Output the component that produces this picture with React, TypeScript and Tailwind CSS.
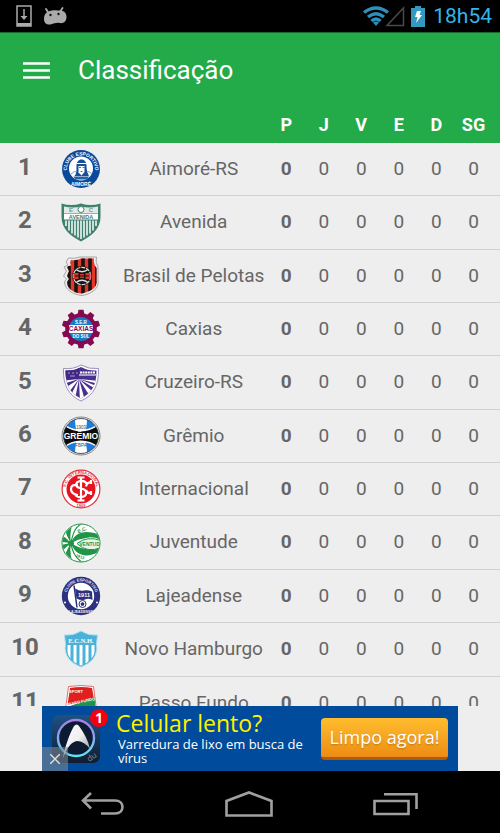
import type { ReactNode } from "react";

function Crest({ name, children }: { name: string; children: ReactNode }) {
  return (
    <svg
      viewBox="0 0 40 40"
      role="img"
      aria-label={name}
      className="mx-auto block size-10 font-['Liberation_Sans',sans-serif]"
    >
      {children}
    </svg>
  );
}

function Aimore() {
  return (
    <Crest name="Aimoré-RS">
      <path id="aim-top" d="M6.500 25 A14.200 14.200 0 1 1 33.500 25" fill="none" />
      <circle cx="20" cy="20" r="19" fill="#0b4a9b" />
      <circle cx="20" cy="19.500" r="12" fill="#fff" />
      <path d="M13.500 27c2-2 2-6 2-10 0-4 2-6.500 5-6.500s5 2.500 5 6.500c0 4 1 7 2.500 10z" fill="#174f98" />
      <path d="M17.500 17h6v6l-3 3.500-3-3z" fill="#fff" />
      <path d="M15.500 14.500h10" stroke="#fff" strokeWidth="1" />
      <path d="M18 18.500h2M21.500 18.500h2M19.500 22.500h2" stroke="#174f98" strokeWidth=".8" />
      <path d="M10 25q3-3 5.500-2.500M31 25q-2-2.500-4.500-2.500" stroke="#7fa1cc" fill="none" />
      <path d="M12.500 27.500h15.500l-2 3h-11.500z" fill="#2a5fa5" />
      <text fontSize="4.800" fontWeight="700" fill="#fff">
        <textPath href="#aim-top" startOffset="50%" textAnchor="middle">CLUBE ESPORTIVO</textPath>
      </text>
      <text x="20" y="36.800" fontSize="5" fontWeight="700" textAnchor="middle" fill="#fff">AIMORÉ</text>
    </Crest>
  );
}

function Avenida() {
  return (
    <Crest name="Avenida">
      <path d="M.5 1.500q10 3 19.500 0q9.500 3 19.500 0v13.500c0 12-9 19-19.500 24.500C9.500 34 .5 27 .5 15z" fill="#40806f" />
      <path d="M3 4.500q9 2 17 0q8 2 17 0v7H3z" fill="#dfeae7" />
      <circle cx="20" cy="7.500" r="3" fill="#fff" stroke="#40806f" strokeWidth="1" />
      <text x="10" y="10" fontSize="6" fontWeight="700" textAnchor="middle" fill="#6d9e91">E</text>
      <text x="30" y="10" fontSize="6" fontWeight="700" textAnchor="middle" fill="#6d9e91">C</text>
      <rect x="3" y="12" width="34" height="5.500" fill="#fff" />
      <text x="20" y="16.800" fontSize="5.500" fontWeight="700" textAnchor="middle" fill="#40806f">AVENIDA</text>
      <path
        d="M5 18.500v5.500M8 18.500v10M11 18.500v13M14 18.500v15M17 18.500v17M20 18.500v18.500M23 18.500v17M26 18.500v15M29 18.500v13M32 18.500v10M35 18.500v5.500"
        stroke="#e5efec"
        strokeWidth="1.700"
      />
    </Crest>
  );
}

function Brasil() {
  return (
    <Crest name="Brasil de Pelotas">
      <clipPath id="bra">
        <path d="M10 4q6 1 10-1.500h13q-1 5 2.500 9.500v15c-1 7-9 9-15 10.500C13 37 6 33 6 26l2-3-2-3 2-5-2-4 4-2-1-2z" />
      </clipPath>
      <path
        d="M7.500 2q6.500 1 11.500-1h16.500q-1.500 5 1.500 10v17c-1 7-10 10.500-16 11.500C12 38.500 4 34 3.500 26l2-3-3-3 3-5-2.500-4 4-2-2-3z"
        fill="#ececec"
        stroke="#a5a5a5"
      />
      <g clipPath="url(#bra)">
        <rect width="40" height="40" fill="#e3372c" />
        <path d="M8 10v30M15 0v40M22 0v40M29 0v40M36 0v40" stroke="#171313" strokeWidth="3.600" />
      </g>
      <circle cx="21" cy="20" r="10" fill="#151515" />
      <circle cx="21" cy="20" r="8.700" fill="none" stroke="#ddd" strokeWidth="1.200" strokeDasharray="4 1" />
      <path d="M15 13.500q6 4.500 12 0M15 26.500q6-4.500 12 0" fill="none" stroke="#ddd" strokeWidth="1.500" />
      <path d="M12.500 17h5v6h-5zM24.500 17h5v6h-5zM19 18h4v4h-4z" fill="#d93328" />
      <path d="M14 20h14" stroke="#151515" strokeWidth="1" />
    </Crest>
  );
}

function Caxias() {
  const teeth = [0, 36, 72, 108, 144, 180, 216, 252, 288, 324];
  return (
    <Crest name="Caxias">
      {teeth.map((angle) => (
        <path key={angle} d="M17.500.8h5l1 5h-7z" fill="#85094f" transform={`rotate(${angle} 20 20)`} />
      ))}
      <circle cx="20" cy="20" r="15.800" fill="#85094f" />
      <circle cx="20" cy="20" r="12" fill="#147cc5" />
      <text x="20" y="14.800" fontSize="4.500" fontWeight="700" textAnchor="middle" fill="#fff">S.E.R</text>
      <rect x="8" y="16" width="24" height="8" rx="1" fill="#fff" />
      <text x="20" y="22.300" fontSize="6.500" fontWeight="700" textAnchor="middle" fill="#85094f">CAXIAS</text>
      <text x="20" y="29" fontSize="4.500" fontWeight="700" textAnchor="middle" fill="#fff">DO SUL</text>
    </Crest>
  );
}

function Cruzeiro() {
  return (
    <Crest name="Cruzeiro-RS">
      <clipPath id="cru">
        <path d="M4.500 7.500q9 .5 15.500-3.500q7 4 15.500 3.500c0 14-4 22-15.500 28C8 30 4.500 21 4.500 7.500z" />
      </clipPath>
      <path
        d="M2.500 5.500q10 1 17.500-3.500q8 4.500 17.500 3.500C38 22 33 32 20 38 7 32 2 22 2.500 5.500z"
        fill="#fff"
        stroke="#9b8fc0"
        strokeWidth="1"
      />
      <g clipPath="url(#cru)">
        <rect width="40" height="40" fill="#4a318e" />
        <path
          d="M18 16 0 18v3.500zM18 16 4 25l4 4zM18 16 10 32l4 4zM18 16l1 24 5-2zM18 16l12 19 4-4zM18 16l20 12v-4zM18 16l20 5v-3z"
          fill="#fff"
        />
        <path d="M18 12h20" stroke="#cdc5e2" strokeWidth="1.500" />
        <path d="M19 9.500h15" stroke="#fff" strokeWidth="2" strokeDasharray="2 .6" />
        <path d="M4 6l14-1v11H4z" fill="#402884" />
        <path d="M7 10h2M11 10h2M15 10h2M9 13h5" stroke="#a79bcb" />
      </g>
    </Crest>
  );
}

function Gremio() {
  return (
    <Crest name="Grêmio">
      <clipPath id="gre">
        <circle cx="20" cy="20" r="17.500" />
      </clipPath>
      <circle cx="20" cy="20" r="19" fill="#fff" stroke="#7d8082" strokeWidth="1" />
      <g clipPath="url(#gre)">
        <rect width="40" height="40" fill="#1c7de0" />
        <path d="M15.500 0h9l1.500 5-1 9H15l-1-9zM15 26h10l1 9-1.500 5h-9L14 35z" fill="#fff" />
        <path d="M0 6q20 16 40 0v28q-20-16-40 0z" fill="#fff" />
        <path d="M0 7.500q20 16 40 0v25q-20-16-40 0z" fill="#0d0d0d" />
      </g>
      <circle cx="20" cy="20" r="17.500" fill="none" stroke="#333" strokeWidth=".8" />
      <text x="20" y="13" fontSize="4.500" textAnchor="middle" fill="#444">1903</text>
      <text x="20" y="23.300" fontSize="8.500" fontWeight="700" textAnchor="middle" fill="#fff">GRÊMIO</text>
      <text x="20" y="31" fontSize="4.500" textAnchor="middle" fill="#444">FBPA</text>
    </Crest>
  );
}

function Internacional() {
  return (
    <Crest name="Internacional">
      <path id="int-top" d="M6 27 A15.500 15.500 0 1 1 34 27" fill="none" />
      <circle cx="20" cy="20" r="18.900" fill="#fff" stroke="#e5303a" strokeWidth="1.200" />
      <circle cx="20" cy="20" r="14.500" fill="#e5141f" />
      <text fontSize="4.200" fontWeight="700" fill="#e5303a">
        <textPath href="#int-top" startOffset="50%" textAnchor="middle">S.C. INTERNACIONAL</textPath>
      </text>
      <path
        d="M20 8v24M16.500 8.500h7M16.500 31.500h7M26 15q-2-4-7-3c-5 1-5 6 0 7l3 1c5 2 4 7-1 8q-5 1-7-3M17 16q-7-1-7 4t7 6M31 13q-5 0-6 4.500M31 24q-5 1-6-3M30 11v4M30 22v4"
        fill="none"
        stroke="#fff"
        strokeWidth="2.200"
      />
      <text x="20" y="38.200" fontSize="4" fontWeight="700" textAnchor="middle" fill="#e5303a">1909</text>
    </Crest>
  );
}

function Juventude() {
  return (
    <Crest name="Juventude">
      <clipPath id="juv">
        <circle cx="20" cy="20" r="18.500" />
      </clipPath>
      <circle cx="20" cy="20" r="19" fill="#fff" stroke="#229447" strokeWidth="1" />
      <g clipPath="url(#juv)" fill="#229447">
        <path d="M10 20Q5 14 0 12v7zM10 20Q5 12 4 6l8-6Q8 10 10 20zM10 20 0 22v7zM10 20Q5 28 4 33l8 7Q8 30 10 20z" />
        <path d="M10 20C14 9 24 6 40 12v5q-8-4-15-2-8 1-15 5zM10 20c4 12 14 16 28 9v-4q-8 3-13 1-8-1-15-6z" />
        <path d="M10 20C12 9 15 3 22 0M10 20c1 9 4 15 12 20" fill="none" stroke="#229447" strokeWidth="1.200" />
        <path d="M16 20.500q10-8 24-3v7q-14 6-24-4z" fill="#e9f5ec" stroke="#229447" />
      </g>
      <circle cx="10" cy="20.500" r="3" fill="#229447" />
      <text x="28.500" y="23" fontSize="5" fontWeight="700" textAnchor="middle" fill="#229447">VENTUD</text>
      <text x="22" y="8.500" fontSize="5" fontWeight="700" textAnchor="middle" fill="#229447" transform="rotate(-20 22 9)">E.C.</text>
      <text x="19" y="35" fontSize="4" fontWeight="700" textAnchor="middle" fill="#229447" transform="rotate(20 19 34)">1913</text>
    </Crest>
  );
}

function Lajeadense() {
  return (
    <Crest name="Lajeadense">
      <path id="laj-top" d="M6 24 A14.600 14.600 0 1 1 34 24" fill="none" />
      <circle cx="20" cy="20" r="19.200" fill="#2c327f" />
      <circle cx="20" cy="20" r="13.200" fill="#fff" />
      <path d="M13 9.500l3 22" stroke="#2c327f" strokeWidth="1.500" />
      <path d="M14 12.500q5 3 9 2t8 1l.5 8.500q-4-2-7.500-.5t-8.500-1z" fill="#2c327f" />
      <text x="23" y="20.500" fontSize="5.500" fontWeight="700" textAnchor="middle" fill="#fff">1911</text>
      <circle cx="21.500" cy="28" r="3.500" fill="#fff" stroke="#2c327f" strokeWidth="1" />
      <path d="m21.500 26 2 1.500-.8 2.200h-2.400l-.8-2.200z" fill="#2c327f" />
      <circle cx="4" cy="26.500" r="1" fill="#fff" />
      <circle cx="36" cy="26.500" r="1" fill="#fff" />
      <text fontSize="4" fontWeight="700" fill="#e4e5f2">
        <textPath href="#laj-top" startOffset="50%" textAnchor="middle">CLUBE ESPORTIVO</textPath>
      </text>
      <text x="20" y="37" fontSize="3.600" fontWeight="700" textAnchor="middle" fill="#e4e5f2">LAJEADENSE</text>
    </Crest>
  );
}

function NovoHamburgo() {
  return (
    <Crest name="Novo Hamburgo">
      <clipPath id="nov">
        <path d="M5 7q9 1 15-3q6 4 15 3l-1 8c2 11-5 18-14 21.500C11 33 4 26 6 15z" />
      </clipPath>
      <path
        d="M3.500 6q9 1 16.500-4q7.500 5 16.500 4l-1 9c2 12-5.500 19-15.500 23C10 34 2.500 27 4.500 15z"
        fill="#4ab1d8"
        stroke="#b3ddec"
        strokeWidth="1"
      />
      <path
        clipPath="url(#nov)"
        d="M8 16v24M14 16v24M20 16v24M26 16v24M32 16v24"
        stroke="#fff"
        strokeWidth="3"
      />
      <text
        x="20"
        y="13.500"
        fontSize="6.500"
        fontWeight="700"
        textAnchor="middle"
        fill="#fff"
        className="font-['Liberation_Serif',serif]"
      >
        E.C.N.H.
      </text>
    </Crest>
  );
}

function PassoFundo() {
  return (
    <Crest name="Passo Fundo">
      <path d="M7.500 3.500q12.500-2 25 0l3.500 27q-8 6-16 8-8-2-16-8z" fill="#fff" stroke="#e0706c" />
      <path d="M9 5q11-2 22 0l2 11L6.500 22z" fill="#e0201f" />
      <path d="m6.500 24 27-10 1.500 15q-7 5-15 7-8-2-14-7z" fill="#1d9447" />
      <text x="15" y="9.500" fontSize="4" fontWeight="700" textAnchor="middle" fill="#fff">SPORT</text>
      <text x="20" y="20" fontSize="4" fontWeight="700" textAnchor="middle" fill="#fff" transform="rotate(-12 20 20)">PASSO FUNDO</text>
    </Crest>
  );
}

const teams = [
  { name: "Aimoré-RS", crest: <Aimore /> },
  { name: "Avenida", crest: <Avenida /> },
  { name: "Brasil de Pelotas", crest: <Brasil /> },
  { name: "Caxias", crest: <Caxias /> },
  { name: "Cruzeiro-RS", crest: <Cruzeiro /> },
  { name: "Grêmio", crest: <Gremio /> },
  { name: "Internacional", crest: <Internacional /> },
  { name: "Juventude", crest: <Juventude /> },
  { name: "Lajeadense", crest: <Lajeadense /> },
  { name: "Novo Hamburgo", crest: <NovoHamburgo /> },
  { name: "Passo Fundo", crest: <PassoFundo /> },
];

const stats = ["P", "J", "V", "E", "D", "SG"];

function StatusBar() {
  return (
    <div className="flex h-8 shrink-0 items-center bg-black px-2">
      <svg viewBox="0 0 16 22" className="ml-2 h-[22px] w-4">
        <path d="M1 1h14v20H1z" fill="none" stroke="#aaa" strokeWidth="1.500" />
        <path d="M1 18h14v3H1z" fill="#aaa" />
        <path d="M8 4v9" stroke="#aaa" strokeWidth="1.500" />
        <path d="M4.500 11h7L8 15z" fill="#aaa" />
      </svg>
      <svg viewBox="0 0 24 18" className="ml-[11px] h-[18px] w-6">
        <path d="M5.500 6 3 2M17 5 19.500 1" stroke="#aaa" strokeWidth="1.800" strokeLinecap="round" />
        <path
          d="M1 12C1 6 5 4 9 3.500c3-.5 5 .2 8-.3 4 .3 6.500 3 6.500 6.500 0 5-3 7-7 6.300-3-.5-5 .5-9 1.500C3.500 18 1 16 1 12z"
          fill="#aaa"
        />
        <circle cx="7.500" cy="8" r="1.200" fill="#111" />
        <circle cx="15.500" cy="7" r="1.200" fill="#111" />
      </svg>
      <svg viewBox="0 0 26 20" className="ml-auto h-5 w-[26px]">
        <g fill="none" stroke="#2c8fbd" strokeWidth="3.400">
          <path d="M1 6.500q12-9 24 0" />
          <path d="M5 11q8-6.500 16 0" />
          <path d="M8.500 15q4.500-4 9 0" />
        </g>
        <path d="M10 16.500q3-2 6 0L13 20z" fill="#2c8fbd" />
      </svg>
      <svg viewBox="0 0 20 21" className="-ml-1 h-[21px] w-5">
        <path d="M18.500 2v17.500H2z" fill="none" stroke="#4a4a4a" strokeWidth="1.500" />
      </svg>
      <svg viewBox="0 0 14 21" className="ml-1.5 h-[21px] w-3.5">
        <path d="M4 0h6v2h4v19H0V2h4z" fill="#3399bf" />
        <path d="M6 5h4L8.500 9H11l-6 8 1.500-6H4z" fill="#fff" />
      </svg>
      <span className="ml-2 text-[21px] leading-8 text-[#33b5e5]">18h54</span>
    </div>
  );
}

function Header() {
  return (
    <header className="flex h-[75px] shrink-0 items-center gap-7 border-t border-[#146b2c] bg-[#23ab4a] pl-[23px] text-white">
      <button type="button" aria-label="Menu">
        <svg viewBox="0 0 27 17" className="block h-[17px] w-[27px]">
          <path d="M0 1.500h27M0 8.500h27M0 15.500h27" stroke="#fff" strokeWidth="2.600" />
        </svg>
      </button>
      <h1 className="text-[26px]">Classificação</h1>
    </header>
  );
}

function Standings() {
  return (
    <main className="min-h-0 flex-1 overflow-hidden">
      <table className="h-[623px] w-full table-fixed border-collapse text-center text-[#666]">
        <colgroup>
          <col className="w-[50px]" />
          <col className="w-[62px]" />
          <col />
          <col className="w-[7.5%]" />
          <col className="w-[7.5%]" />
          <col className="w-[7.5%]" />
          <col className="w-[7.5%]" />
          <col className="w-[7.5%]" />
          <col className="w-[9%]" />
        </colgroup>
        <thead>
          <tr className="h-9 bg-[#23ab4a] text-lg text-white">
            <td colSpan={3} />
            {stats.map((stat) => (
              <th key={stat} scope="col" className="p-0 font-bold last:pr-2">
                {stat}
              </th>
            ))}
          </tr>
        </thead>
        <tbody>
          {teams.map((team, i) => (
            <tr key={team.name} className="border-b border-[#d2d2d2]">
              <td className="p-0 pb-1 text-2xl font-bold">{i + 1}</td>
              <td className="p-0">{team.crest}</td>
              <td className="p-0 pl-2 text-[19px] whitespace-nowrap">{team.name}</td>
              {stats.map((stat) => (
                <td key={stat} className="p-0 text-[19px] last:pr-2 nth-[4]:font-bold">
                  0
                </td>
              ))}
            </tr>
          ))}
        </tbody>
      </table>
    </main>
  );
}

function Advert() {
  return (
    <aside className="relative mx-auto flex h-[65px] w-full max-w-[416px] shrink-0 items-center bg-[#004b9b] px-2.5 font-['Open_Sans',sans-serif] text-white">
      <div className="relative shrink-0">
        <svg viewBox="0 0 48 48" className="block size-12">
          <defs>
            <linearGradient id="tile" x1="0" y1="0" x2="0" y2="1">
              <stop offset="0" stopColor="#1d5284" />
              <stop offset="1" stopColor="#101d30" />
            </linearGradient>
            <linearGradient id="ring" x1="0" y1="0" x2="0" y2="1">
              <stop offset="0" stopColor="#a77fe0" />
              <stop offset=".4" stopColor="#8f9cf0" />
              <stop offset="1" stopColor="#5fe6f5" />
            </linearGradient>
            <linearGradient id="dart" x1="0" y1="0" x2="1" y2="1">
              <stop offset="0" stopColor="#fff" />
              <stop offset=".5" stopColor="#eee" />
              <stop offset="1" stopColor="#888" />
            </linearGradient>
          </defs>
          <rect width="48" height="48" rx="7" fill="url(#tile)" />
          <circle cx="24" cy="23" r="18" fill="#0c1b31" stroke="url(#ring)" strokeWidth="2.400" />
          <path d="M11 43C13 31 18 18 22 11q3-3 5 0c5 7 9 14 11 23q-6-8-13-8-8 1-14 17z" fill="url(#dart)" />
          <text x="36" y="45" fontSize="8" fill="#7d8ba0" transform="rotate(-35 40 44)">du</text>
        </svg>
        <span className="absolute -top-1.5 -right-2 flex size-[18px] items-center justify-center rounded-full bg-[#f5000f] text-sm font-bold">
          1
        </span>
      </div>
      <button
        type="button"
        aria-label="Fechar"
        className="absolute bottom-0 left-0 flex h-6 w-[26px] items-center justify-center bg-[#7a8794]/60"
      >
        <svg viewBox="0 0 10 10" className="size-2.5">
          <path d="m0 0 10 10M10 0 0 10" stroke="#ddd" strokeWidth="1.500" />
        </svg>
      </button>
      <div className="ml-4 min-w-0 flex-1 pb-1">
        <p className="text-[23px] leading-7 font-medium text-[#fff200]">Celular lento?</p>
        <p className="pl-0.5 text-[13px] leading-3.5">Varredura de lixo em busca de vírus</p>
      </div>
      <a
        href="#"
        className="flex h-[42px] w-[127px] shrink-0 items-center justify-center rounded-sm border-b-3 border-[#b35a00] bg-linear-to-b from-[#ffbd2e] to-[#ec8c12] text-lg font-medium whitespace-nowrap text-shadow-sm"
      >
        Limpo agora!
      </a>
    </aside>
  );
}

function NavBar() {
  return (
    <nav className="flex h-[62px] shrink-0 items-center justify-center gap-[100px] bg-black pt-1">
      <button type="button" aria-label="Voltar">
        <svg viewBox="0 0 44 24" className="block h-6 w-11" fill="none" stroke="#a0a0a0" strokeWidth="2.600">
          <path d="M10 1 2 8.500 10 16.500M2 8.500h32c10 0 10 13 0 13H20" />
        </svg>
      </button>
      <button type="button" aria-label="Início">
        <svg viewBox="0 0 48 26" className="block h-[26px] w-12" fill="none" stroke="#a0a0a0" strokeWidth="2.600">
          <path d="M1.500 24.500V10L24 1.500 46.500 10v14.500z" />
        </svg>
      </button>
      <button type="button" aria-label="Recentes">
        <svg viewBox="0 0 46 24" className="block h-6 w-[46px]" fill="none" stroke="#a0a0a0" strokeWidth="2.600">
          <path d="M1.500 9h34v13h-34zM11 2.300h32.500V17" />
        </svg>
      </button>
    </nav>
  );
}

export default function App() {
  return (
    <div className="flex h-screen flex-col bg-[#eee] font-['Roboto',sans-serif]">
      <StatusBar />
      <Header />
      <Standings />
      <Advert />
      <NavBar />
    </div>
  );
}
